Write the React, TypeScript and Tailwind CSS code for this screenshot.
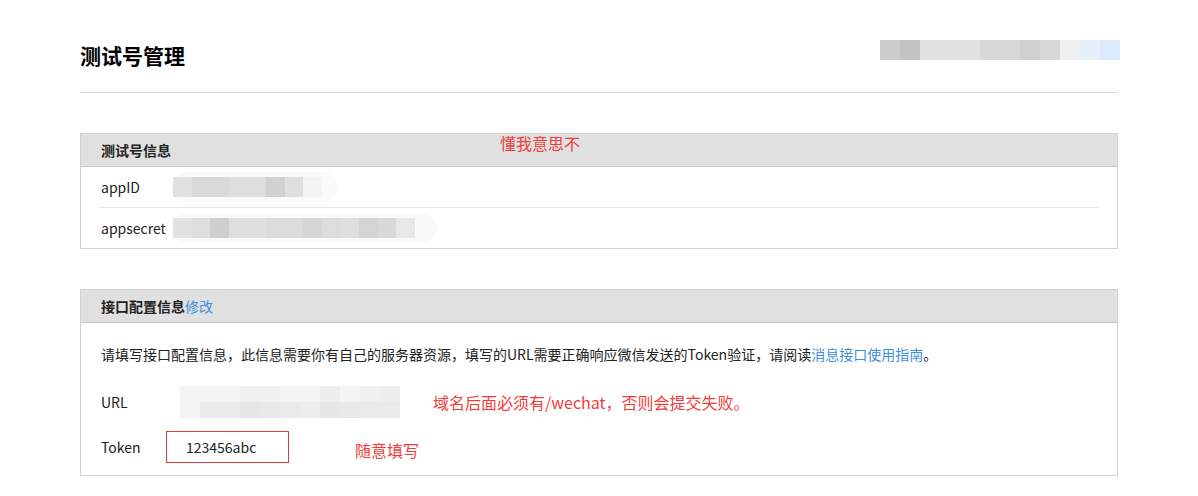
import React from 'react';

const topBlocks = ['#cccccc', '#c3c3c3', '#e2e2e2', '#e2e2e2', '#e2e2e2', '#d8d8d8', '#d8d8d8', '#d0d0d0', '#d8d8d8', '#f0f0f0', '#e6f0fa', '#dcebfc'];
const appIdBlocks = ['#e0e0e0', '#d9d9d9', '#d9d9d9', '#dddddd', '#dddddd', '#d1d1d1', '#dfdfdf', '#f4f4f4'];
const secretBlocks = ['#e2e2e2', '#dddddd', '#cfcfcf', '#dfdfdf', '#dfdfdf', '#dcdcdc', '#dcdcdc', '#d6d6d6', '#dddddd', '#dfdfdf', '#d5d5d5', '#d8d8d8', '#e8e8e8'];
const urlTop = ['#f4f4f4', '#f4f4f4', '#f4f4f4', '#f0f0f0', '#f0f0f0', '#f4f4f4', '#f4f4f4', '#eeeeee', '#f4f4f4', '#f0f0f0', '#eeeeee'];
const urlBottom = ['#f4f4f4', '#eaeaea', '#eaeaea', '#e6e6e6', '#e8e8e8', '#eaeaea', '#eeeeee', '#e6e6e6', '#e8e8e8', '#eaeaea', '#eaeaea'];

function Blocks({ colors, w, h }: { colors: string[]; w: string; h: string }) {
  return (
    <div className="flex">
      {colors.map((c, i) => (
        <div key={i} className={`${w} ${h}`} style={{ backgroundColor: c }} />
      ))}
    </div>
  );
}

function PanelHeader({ children }: { children: React.ReactNode }) {
  return (
    <div className="h-[33px] bg-[#e0e0e0] border-b border-[#c6c6c6] flex items-center px-[20px] text-[14px] font-bold text-[#222]">
      {children}
    </div>
  );
}

export default function App() {
  return (
    <div className="w-[1198px] h-[496px] bg-white overflow-hidden px-[80px] pt-[40px] text-[#222]" style={{ fontFamily: '"Noto Sans CJK SC", "Noto Sans", sans-serif' }}>
      <div className="flex justify-between items-start border-b border-[#d6d6d6] pb-[22px]">
        <h1 className="text-[21px] leading-[30px] font-bold text-black">测试号管理</h1>
        <div className="mr-[-2px]">
          <Blocks colors={topBlocks} w="w-[20px]" h="h-[20px]" />
        </div>
      </div>

      {/* test account info */}
      <div className="relative mt-[40px] border border-[#d2d2d2]">
        <PanelHeader>测试号信息</PanelHeader>
        <span className="absolute left-[419px] top-[-3px] text-[16px] text-[#f23c3c] font-normal">懂我意思不</span>
        <div className="px-[18px]">
          <div className="h-[41px] flex items-center border-b border-[#e6e6e6] pl-[2px] text-[14px]">
            <span className="w-[72px]">appID</span>
            <div className="rounded-full bg-[#fafafa] py-[5px] pr-[16px] pl-[2px] -ml-[2px]">
              <Blocks colors={appIdBlocks} w="w-[18.6px]" h="h-[20px]" />
            </div>
          </div>
          <div className="h-[40px] flex items-center pl-[2px] text-[14px]">
            <span className="w-[72px]">appsecret</span>
            <div className="rounded-full bg-[#fafafa] py-[5px] pr-[22px] pl-[2px] -ml-[2px]">
              <Blocks colors={secretBlocks} w="w-[18.6px]" h="h-[20px]" />
            </div>
          </div>
        </div>
      </div>

      {/* interface config */}
      <div className="mt-[40px] border border-[#d2d2d2]">
        <PanelHeader>
          接口配置信息<span className="text-[#3d8fe0] font-normal">修改</span>
        </PanelHeader>
        <div className="px-[20px] pt-[21px] pb-[12px] text-[14px]">
          <p className="leading-[20px]">
            请填写接口配置信息，此信息需要你有自己的服务器资源，填写的URL需要正确响应微信发送的Token验证，请阅读
            <span className="text-[#3d8fe0]">消息接口使用指南</span>。
          </p>
          <div className="mt-[22px] flex items-center h-[32px]">
            <span className="w-[79px]">URL</span>
            <div className="rounded-[3px] bg-[#f7f7f7]">
              <Blocks colors={urlTop} w="w-[20px]" h="h-[16px]" />
              <Blocks colors={urlBottom} w="w-[20px]" h="h-[16px]" />
            </div>
            <span className="ml-[33px] text-[16px] text-[#f23c3c]">域名后面必须有/wechat，否则会提交失败。</span>
          </div>
          <div className="mt-[13px] flex items-center">
            <span className="w-[65px]">Token</span>
            <div className="w-[123px] h-[32px] border border-[#e53a3a] flex items-center pl-[19px]">
              123456abc
            </div>
            <span className="ml-[66px] mt-[6px] text-[16px] text-[#f23c3c]">随意填写</span>
          </div>
        </div>
      </div>
    </div>
  );
}
